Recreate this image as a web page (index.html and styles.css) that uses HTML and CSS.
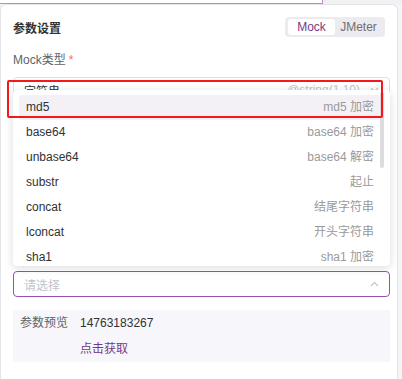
FILE: index.html
```html
<!DOCTYPE html>
<html lang="zh">
<head>
<meta charset="UTF-8">
<meta name="viewport" content="width=device-width, initial-scale=1.0">
<link rel="stylesheet" href="styles.css">
</head>
<body>
<div class="top-strip">
	<div class="top-box"></div>
</div>

<div class="card">
	<div class="card-header">
		<strong class="title">参数设置</strong>
		<div class="segment">
			<span class="segment-item active">Mock</span>
			<span class="segment-item">JMeter</span>
		</div>
	</div>

	<label class="label">Mock类型<span class="required">*</span></label>
	<div class="select">
		<span class="select-value">字符串</span>
		<span class="select-hint">@string(1,10)</span>
		<svg class="arrow" width="9" height="6" viewBox="0 0 9 6"><path d="M1 1 L4.5 4.5 L8 1" fill="none" stroke="#c0c4cc" stroke-width="1.2"/></svg>
	</div>

	<div class="select select-focus">
		<span class="placeholder">请选择</span>
		<svg class="arrow" width="9" height="6" viewBox="0 0 9 6"><path d="M1 5 L4.5 1.5 L8 5" fill="none" stroke="#c0c4cc" stroke-width="1.2"/></svg>
	</div>

	<div class="preview">
		<span class="preview-label">参数预览</span>
		<span class="preview-value">14763183267</span>
		<span></span>
		<a class="preview-link">点击获取</a>
	</div>

	<div class="dropdown">
		<ul class="options">
			<li class="option hover"><span>md5</span><span class="desc">md5 加密</span></li>
			<li class="option"><span>base64</span><span class="desc">base64 加密</span></li>
			<li class="option"><span>unbase64</span><span class="desc">base64 解密</span></li>
			<li class="option"><span>substr</span><span class="desc">起止</span></li>
			<li class="option"><span>concat</span><span class="desc">结尾字符串</span></li>
			<li class="option"><span>lconcat</span><span class="desc">开头字符串</span></li>
			<li class="option"><span>sha1</span><span class="desc">sha1 加密</span></li>
		</ul>
		<div class="scroll-thumb"></div>
	</div>

	<div class="mark"></div>
</div>
</body>
</html>
```

FILE: styles.css
```css
body {
	margin: 0;
	padding: 0;
	background-color: #f4f5f7;
	font-family: "Liberation Sans", "Noto Sans CJK SC", sans-serif;
	font-size: 12px;
	color: #303133;
	overflow: hidden;
}

.top-strip {
	height: 4px;
	background-color: #f1f1f3;
}

.top-box {
	width: 323px;
	height: 4px;
	box-sizing: border-box;
	background-color: #fff;
	border-right: 1px solid #b58fc6;
	border-bottom: 1px solid #b58fc6;
}

.card {
	position: relative;
	margin-right: 4px;
	height: 375px;
	box-sizing: border-box;
	padding: 12px 7px 0 12px;
	background-color: #fff;
	border: 1px solid #e4e4e8;
	border-bottom: none;
	border-radius: 6px 6px 0 0;
}

.card-header {
	display: flex;
	justify-content: space-between;
	align-items: center;
	height: 20px;
	padding-right: 5px;
}

.title {
	font-size: 12px;
	font-weight: 600;
	color: #333;
}

.segment {
	display: flex;
	padding: 2px 3px;
	background-color: #ebebf0;
	border-radius: 4px;
}

.segment-item {
	width: 47px;
	height: 16px;
	line-height: 16px;
	text-align: center;
	color: #707070;
	border-radius: 3px;
}

.segment-item.active {
	background-color: #fff;
	color: #783887;
}

.label {
	display: block;
	margin-top: 15px;
	line-height: 16px;
	color: #606266;
}

.required {
	color: #f56c6c;
	margin-left: 3px;
}

.select {
	display: flex;
	align-items: center;
	height: 26px;
	margin-top: 9px;
	padding: 0 10px;
	border: 1px solid #dcdfe6;
	border-radius: 4px;
	box-sizing: border-box;
}

.select-value {
	flex: 1;
	color: #303133;
}

.select-hint {
	color: #c0c4cc;
	margin-right: 10px;
}

.select-focus {
	margin-top: 168px;
	border-color: #9a4fb8;
}

.placeholder {
	flex: 1;
	color: #c0c4cc;
}

.arrow {
	display: block;
}

.preview {
	display: grid;
	grid-template-columns: 60px 1fr;
	margin-top: 13px;
	padding: 0 7px;
	background-color: #f7f7fb;
	line-height: 26px;
}

.preview-label {
	color: #606266;
}

.preview-value {
	color: #303133;
}

.preview-link {
	color: #783887;
	cursor: pointer;
}

.dropdown {
	position: absolute;
	left: 12px;
	top: 85px;
	width: 377px;
	height: 176px;
	overflow: hidden;
	background-color: #fff;
	border-radius: 4px;
	box-shadow: 0 2px 10px rgba(0, 0, 0, 0.14);
}

.options {
	list-style: none;
	margin: 0;
	padding: 5px 9px 0 6px;
}

.option {
	display: flex;
	justify-content: space-between;
	height: 25px;
	line-height: 25px;
	padding: 0 7px;
	border-radius: 3px;
	color: #303133;
}

.option.hover {
	background-color: #f4f1f6;
}

.desc {
	color: #9a9a9a;
}

.scroll-thumb {
	position: absolute;
	left: 367px;
	top: 2px;
	width: 4px;
	height: 76px;
	background-color: #dcdcde;
	border-radius: 2px;
}

.mark {
	position: absolute;
	left: 6px;
	top: 75px;
	width: 376px;
	height: 38px;
	box-sizing: border-box;
	border: 2px solid #f5181a;
	border-radius: 2px;
}
```
